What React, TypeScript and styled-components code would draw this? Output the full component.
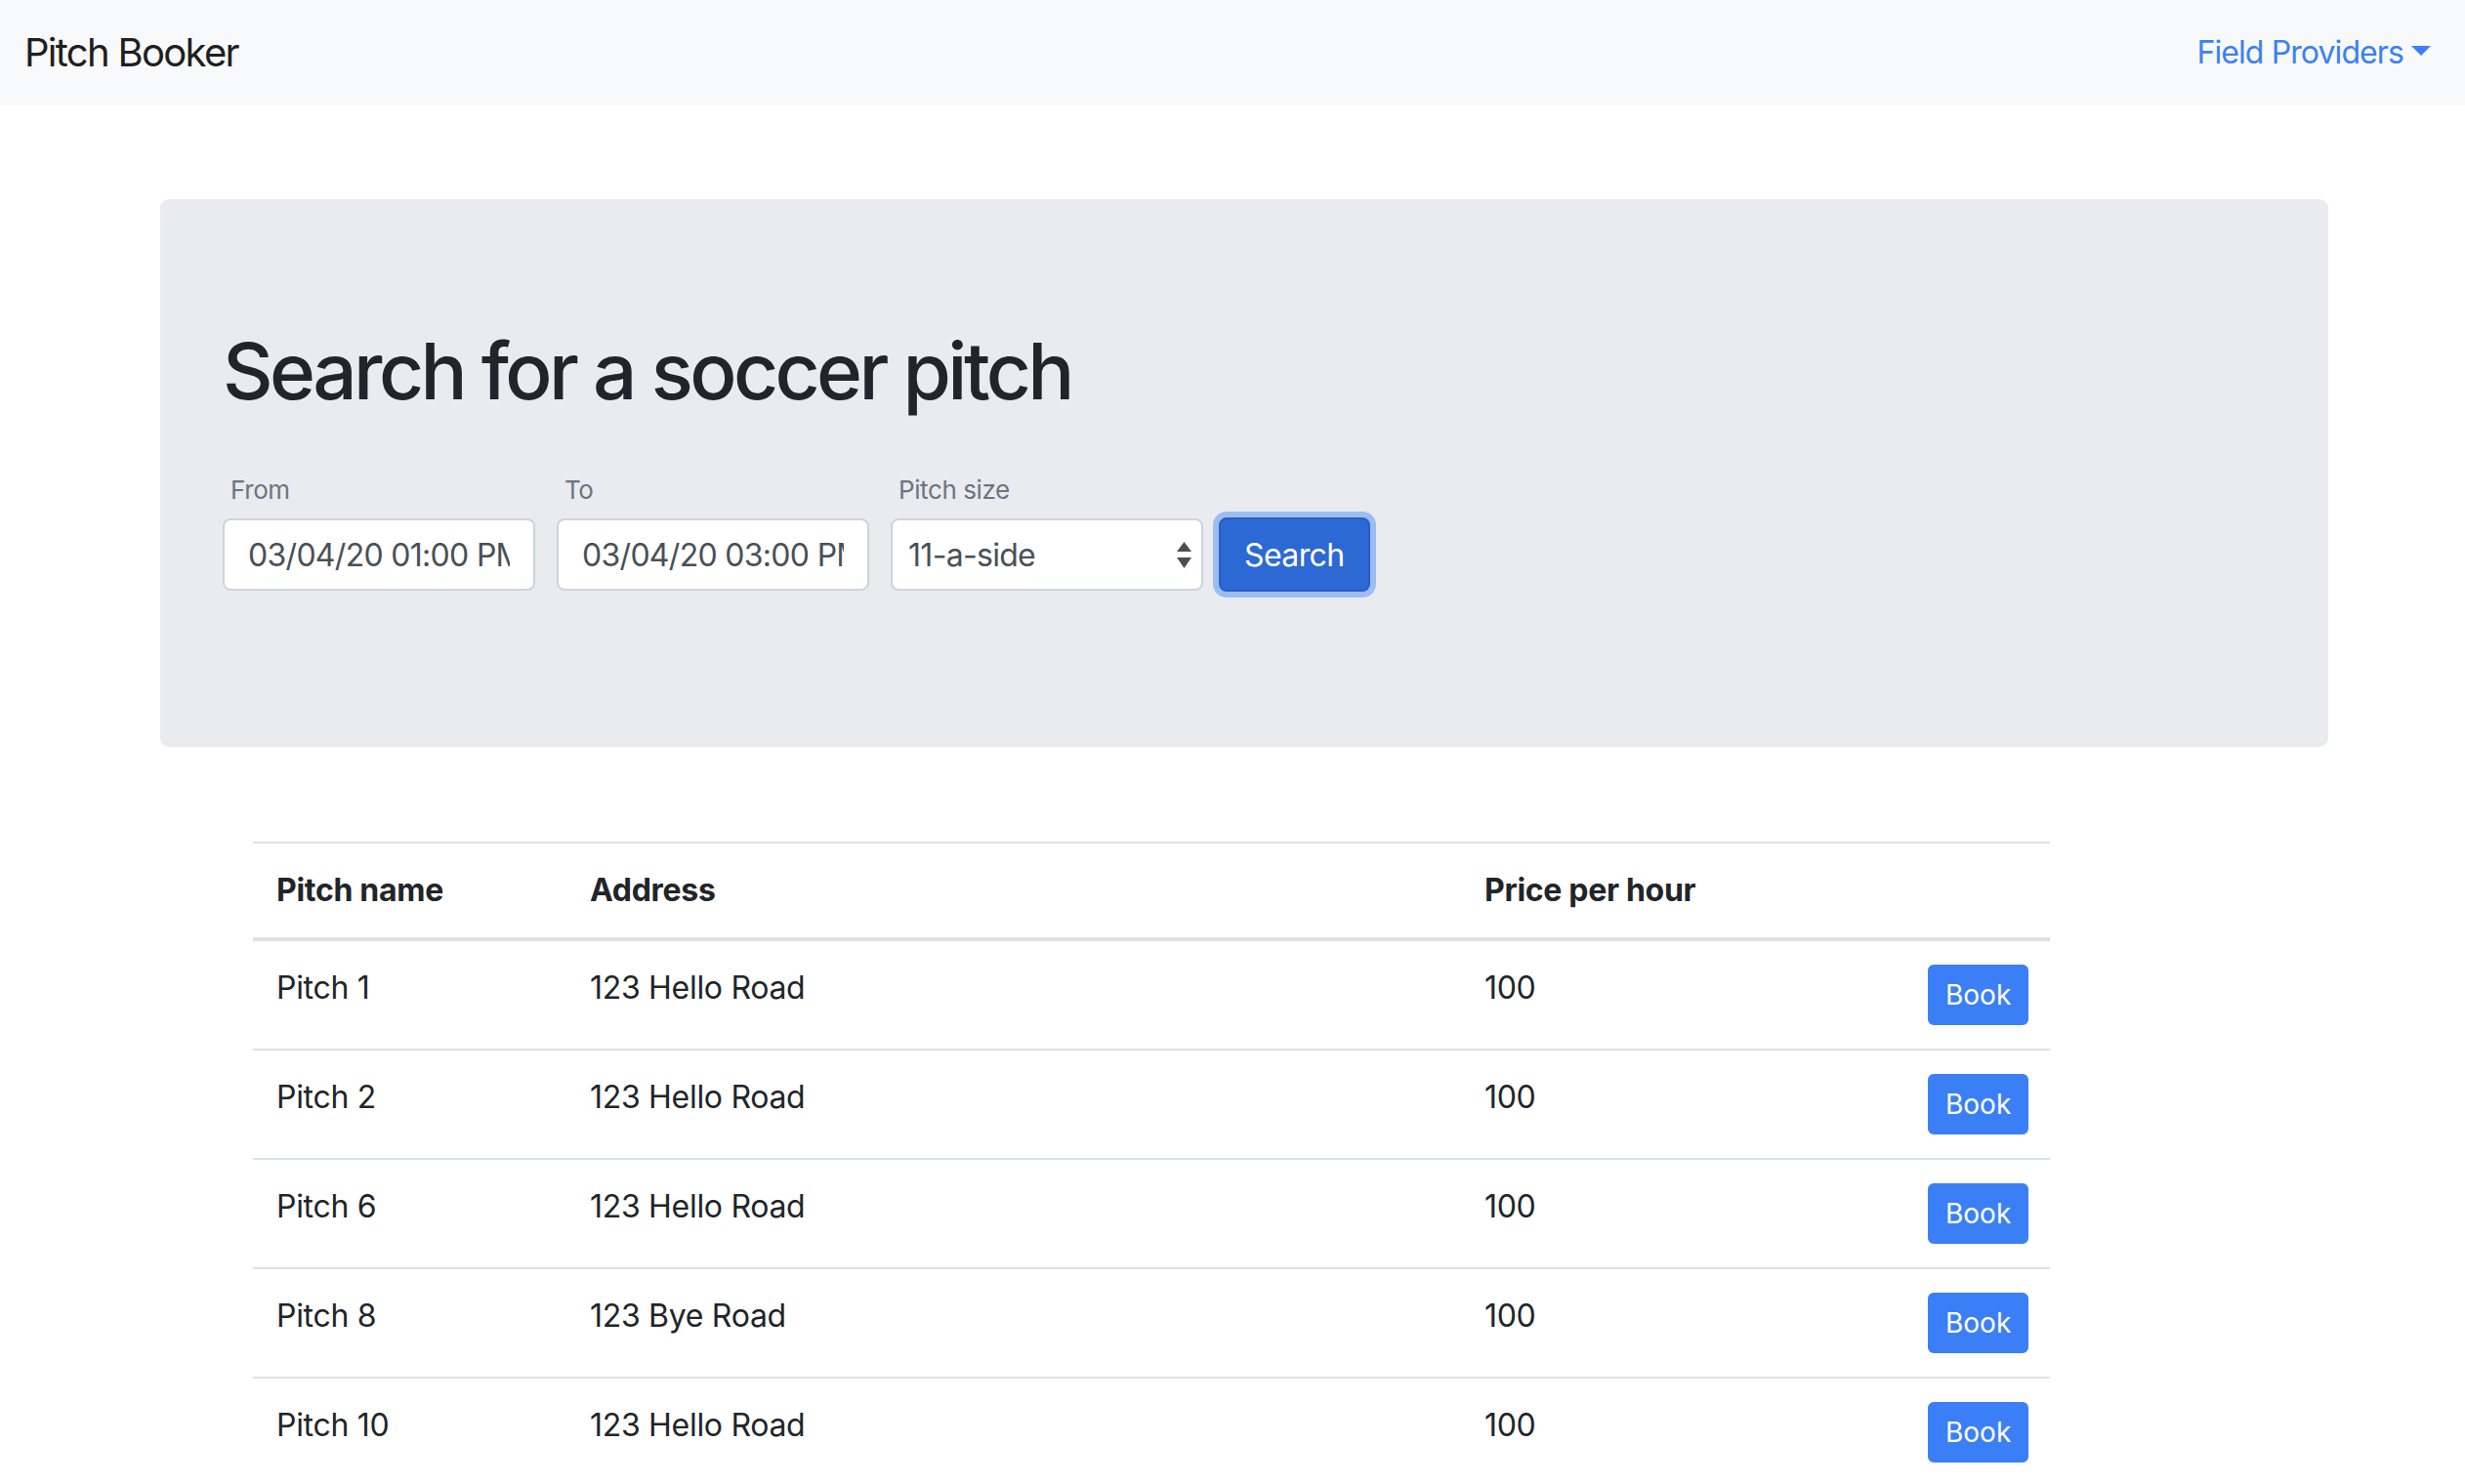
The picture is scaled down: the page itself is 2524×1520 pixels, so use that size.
import React from "react";
import styled, { createGlobalStyle } from "styled-components";

const GlobalStyle = createGlobalStyle`
  html, body {
    margin: 0;
    padding: 0;
    background: #ffffff;
  }
  body {
    font-family: Inter, "Noto Sans", "Liberation Sans", sans-serif;
    color: #212529;
  }
  * { box-sizing: border-box; }
`;

const Page = styled.div`
  width: 2524px;
  min-height: 1520px;
`;

const NavBar = styled.nav`
  height: 108px;
  background: #f8f9fa;
  display: flex;
  align-items: center;
  justify-content: space-between;
  padding: 0 35px 0 25px;
`;

const Brand = styled.a`
  font-size: 40px;
  line-height: 60px;
  color: rgba(0, 0, 0, 0.9);
  text-decoration: none;
  letter-spacing: -1.7px;
`;

const NavDropdown = styled.a`
  display: flex;
  align-items: center;
  font-size: 32px;
  line-height: 48px;
  color: #3a80f6;
  text-decoration: none;
  letter-spacing: -0.9px;
  cursor: pointer;
`;

const Caret = styled.span`
  display: inline-block;
  margin-left: 8px;
  margin-top: -4px;
  width: 0;
  height: 0;
  border-top: 10px solid #3a80f6;
  border-left: 10px solid transparent;
  border-right: 10px solid transparent;
`;

const Main = styled.main`
  padding: 96px 140px 0 164px;
`;

const Jumbotron = styled.section`
  background: #e9ebef;
  border-radius: 9px;
  padding: 128px 64px 128px 64px;
`;

const Heading = styled.h1`
  margin: 0;
  font-size: 80px;
  line-height: 96px;
  font-weight: 500;
  color: #212529;
  letter-spacing: -3.6px;
`;

const SearchForm = styled.form`
  display: flex;
  align-items: flex-end;
  gap: 16px;
  margin-top: 55px;
  padding-bottom: 32px;
`;

const Fields = styled.div`
  display: flex;
  gap: 22px;
`;

const Field = styled.div`
  display: flex;
  flex-direction: column;
  width: 320px;
`;

const Label = styled.label`
  font-size: 26px;
  line-height: 38px;
  margin-bottom: 10px;
  padding-left: 8px;
  color: #6c757d;
  letter-spacing: -0.4px;
`;

const TextInput = styled.input`
  width: 100%;
  height: 74px;
  padding: 0 24px;
  font-family: inherit;
  font-size: 32px;
  letter-spacing: -0.7px;
  color: #495057;
  background: #ffffff;
  border: 2px solid #ced4da;
  border-radius: 8px;
  outline: none;
`;

const SelectBox = styled.div`
  position: relative;
  height: 74px;
  display: flex;
  align-items: center;
  justify-content: space-between;
  padding: 0 10px 0 16px;
  font-size: 32px;
  letter-spacing: -0.7px;
  color: #495057;
  background: #ffffff;
  border: 2px solid #ced4da;
  border-radius: 8px;
`;

const SearchButton = styled.button`
  height: 76px;
  padding: 0 24px;
  margin-bottom: -1px;
  font-family: inherit;
  font-size: 32px;
  letter-spacing: -0.6px;
  color: #ffffff;
  background: #2c69d5;
  border: 2px solid #275fc6;
  border-radius: 8px;
  box-shadow: 0 0 0 6px #9dbdf2;
  cursor: pointer;
`;

const TableWrap = styled.div`
  margin: 97px 0 0 95px;
  width: 1840px;
`;

const Table = styled.table`
  width: 100%;
  border-collapse: collapse;
  table-layout: fixed;
  font-size: 32px;
  line-height: 48px;
  color: #212529;
  letter-spacing: -0.3px;
`;

const HeadCell = styled.th`
  text-align: left;
  font-weight: 700;
  padding: 24px;
  border-top: 2px solid #dee2e6;
  border-bottom: 4px solid #dee2e6;
  vertical-align: bottom;
`;

const Cell = styled.td<{ $align?: string }>`
  padding: 24px;
  border-top: 2px solid #dee2e6;
  vertical-align: top;
  text-align: ${(p) => p.$align || "left"};
`;

const BookButton = styled.button`
  display: block;
  margin-left: auto;
  padding: 8px 16px;
  font-family: inherit;
  font-size: 28px;
  line-height: 42px;
  color: #ffffff;
  background: #3b7ff6;
  border: 2px solid #3b7ff6;
  border-radius: 6px;
  cursor: pointer;
`;

const rows = [
  { name: "Pitch 1", address: "123 Hello Road", price: 100 },
  { name: "Pitch 2", address: "123 Hello Road", price: 100 },
  { name: "Pitch 6", address: "123 Hello Road", price: 100 },
  { name: "Pitch 8", address: "123 Bye Road", price: 100 },
  { name: "Pitch 10", address: "123 Hello Road", price: 100 },
];

const SelectArrows = () => (
  <svg width="15" height="27" viewBox="0 0 15 27" aria-hidden="true">
    <polygon points="0,10 7.5,0 15,10" fill="#4a4f55" />
    <polygon points="0,16 15,16 7.5,27" fill="#4a4f55" />
  </svg>
);

export default function App() {
  return (
    <Page>
      <GlobalStyle />
      <NavBar>
        <Brand>Pitch Booker</Brand>
        <NavDropdown>
          Field Providers
          <Caret />
        </NavDropdown>
      </NavBar>
      <Main>
        <Jumbotron>
          <Heading>Search for a soccer pitch</Heading>
          <SearchForm onSubmit={(e) => e.preventDefault()}>
            <Fields>
              <Field>
                <Label>From</Label>
                <TextInput type="text" defaultValue="03/04/20 01:00 PM" readOnly />
              </Field>
              <Field>
                <Label>To</Label>
                <TextInput type="text" defaultValue="03/04/20 03:00 PM" readOnly />
              </Field>
              <Field>
                <Label>Pitch size</Label>
                <SelectBox>
                  <span>11-a-side</span>
                  <SelectArrows />
                </SelectBox>
              </Field>
            </Fields>
            <SearchButton type="submit">Search</SearchButton>
          </SearchForm>
        </Jumbotron>
        <TableWrap>
          <Table>
            <colgroup>
              <col style={{ width: 321 }} />
              <col style={{ width: 916 }} />
              <col style={{ width: 454 }} />
              <col style={{ width: 149 }} />
            </colgroup>
            <thead>
              <tr>
                <HeadCell>Pitch name</HeadCell>
                <HeadCell>Address</HeadCell>
                <HeadCell>Price per hour</HeadCell>
                <HeadCell />
              </tr>
            </thead>
            <tbody>
              {rows.map((r) => (
                <tr key={r.name}>
                  <Cell>{r.name}</Cell>
                  <Cell>{r.address}</Cell>
                  <Cell>{r.price}</Cell>
                  <Cell $align="right">
                    <BookButton type="button">Book</BookButton>
                  </Cell>
                </tr>
              ))}
            </tbody>
          </Table>
        </TableWrap>
      </Main>
    </Page>
  );
}
